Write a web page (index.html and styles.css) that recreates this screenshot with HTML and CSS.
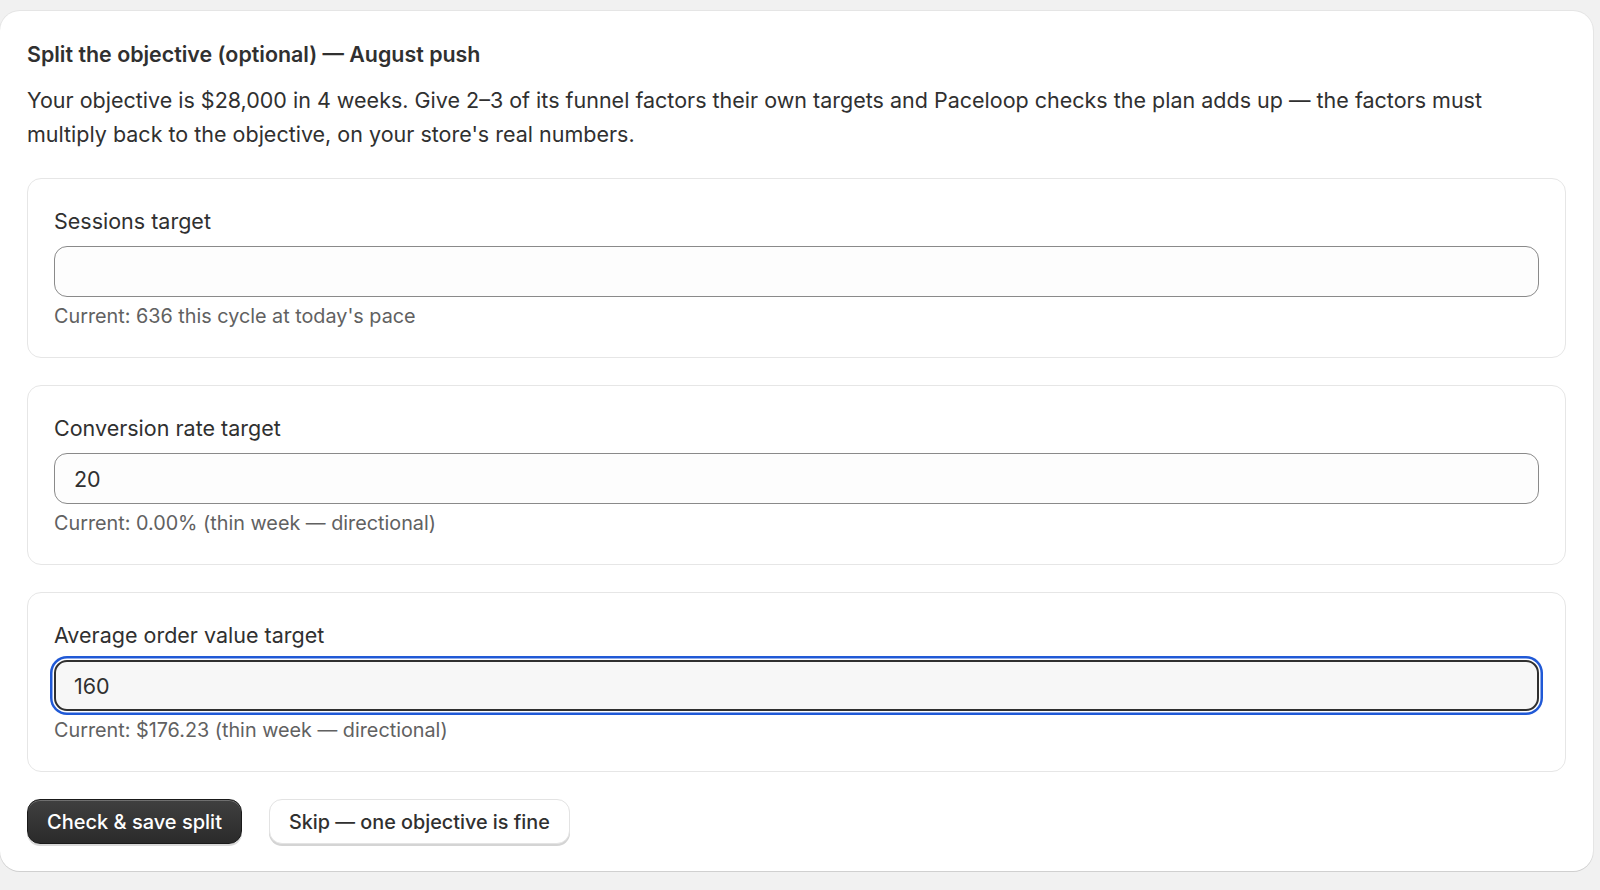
FILE: index.html
```html
<!DOCTYPE html>
<html lang="en">
<head>
    <meta charset="UTF-8">
    <meta name="viewport" content="width=device-width, initial-scale=1.0">
    <title>Split the objective</title>
    <link rel="stylesheet" href="styles.css">
</head>
<body>
    <div class="card">
        <h2 class="card_title">Split the objective (optional) — August push</h2>
        <p class="card_text">Your objective is $28,000 in 4 weeks. Give 2–3 of its funnel factors their own targets and Paceloop checks the plan adds up — the factors must multiply back to the objective, on your store's real numbers.</p>

        <div class="field_box">
            <label class="field_label" for="sessions">Sessions target</label>
            <input class="field_input" id="sessions" type="text" value="">
            <div class="field_help">Current: 636 this cycle at today's pace</div>
        </div>

        <div class="field_box">
            <label class="field_label" for="conversion">Conversion rate target</label>
            <input class="field_input" id="conversion" type="text" value="20">
            <div class="field_help">Current: 0.00% (thin week — directional)</div>
        </div>

        <div class="field_box">
            <label class="field_label" for="aov">Average order value target</label>
            <input class="field_input focused" id="aov" type="text" value="160">
            <div class="field_help">Current: $176.23 (thin week — directional)</div>
        </div>

        <div class="actions">
            <button class="btn btn_primary" type="button">Check &amp; save split</button>
            <button class="btn btn_secondary" type="button">Skip — one objective is fine</button>
        </div>
    </div>
</body>
</html>
```

FILE: styles.css
```css
* {margin: 0; padding: 0; box-sizing: border-box;}

body
{
    background: #f1f1f1;
    padding: 11px 7px 18px 0;
    font-family: Inter, "Noto Sans", sans-serif;
    color: #303030;
}

.card
{
    background: #ffffff;
    border-radius: 20px;
    padding: 27px;
    box-shadow: 0 1px 0 rgba(26, 26, 26, 0.1), 0 0 0 1px rgba(26, 26, 26, 0.05);
    display: flex;
    flex-direction: column;
    gap: 27px;
}

.card_title
{
    font-size: 21.4px;
    line-height: 32px;
    font-weight: 600;
    margin-bottom: -14px;
}

.card_text
{
    font-size: 21.5px;
    line-height: 34px;
    padding-right: 20px;
}

.field_box
{
    border: 1.5px solid #e6e6e6;
    border-radius: 14px;
    padding: 26px;
    display: flex;
    flex-direction: column;
}

.field_label
{
    font-size: 21.5px;
    line-height: 34px;
    margin-top: -1px;
    margin-bottom: 8px;
}

.field_input
{
    height: 51px;
    width: 100%;
    border: 1.5px solid #8a8a8a;
    border-radius: 13px;
    background: #fdfdfd;
    padding: 0 19px;
    font-family: inherit;
    font-size: 21.5px;
    color: #303030;
    outline: none;
}

.field_input.focused
{
    background: #f7f7f7;
    border: 2.5px solid #303030;
    padding: 0 18px;
    box-shadow: 0 0 0 1.5px #ffffff, 0 0 0 4px #2059d6;
}

.field_help
{
    font-size: 19.8px;
    line-height: 32px;
    margin-top: 3px;
    margin-bottom: -1px;
    color: #616161;
}

.actions
{
    display: flex;
    gap: 27px;
}

.btn
{
    height: 45px;
    border-radius: 13px;
    font-family: inherit;
    font-size: 20px;
    font-weight: 500;
    padding: 0 19px;
    cursor: pointer;
}

.btn_primary
{
    background: linear-gradient(#404040, #2a2a2a);
    color: #ffffff;
    border: 1.5px solid #1a1a1a;
    box-shadow: inset 0 1px 0 rgba(255, 255, 255, 0.25), 0 2px 0 rgba(0, 0, 0, 0.15);
}

.btn_secondary
{
    background: #ffffff;
    color: #303030;
    border: 1px solid #e3e3e3;
    box-shadow: 0 2px 0 #d4d4d4;
    font-size: 19.8px;
}
```
